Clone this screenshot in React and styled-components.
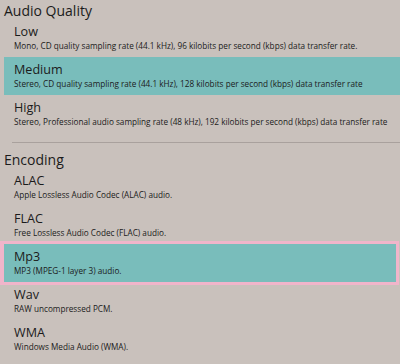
import React from "react";
import styled, { createGlobalStyle } from "styled-components";

const Global = createGlobalStyle`
  html, body { margin: 0; padding: 0; background: #c9c1bc; }
  body { font-family: "Open Sans", "Noto Sans", sans-serif; color: #1b1b1b; }
`;

const Page = styled.div`
  width: 400px;
  height: 364px;
  overflow: hidden;
  background: #c9c1bc;
`;

const Header = styled.div`
  font-size: 14px;
  line-height: 17px;
  padding: ${(p) => p.$top}px 0 0 4px;
`;

const List = styled.div`
  display: flex;
  flex-direction: column;
  padding-left: 4px;
`;

const Row = styled.div`
  height: 38px;
  box-sizing: border-box;
  padding: 5px 0 0 10px;
  background: ${(p) => (p.$selected ? "#79bdbb" : "transparent")};
  ${(p) =>
    p.$focused &&
    `
    margin-right: 4px;
    box-shadow: 0 0 0 3px #f0b5ca, -1px 0 0 3px #f0b5ca;
  `}
`;

const Title = styled.div`
  font-size: 12.6px;
  line-height: 16px;
  white-space: nowrap;
`;

const Desc = styled.div`
  font-size: 8.2px;
  line-height: 12px;
  white-space: nowrap;
`;

const Separator = styled.div`
  height: 1px;
  margin: 9px 0 0 12px;
  background: #a9a19d;
`;

const quality = [
  {
    t: "Low",
    d: "Mono, CD quality sampling rate (44.1 kHz), 96 kilobits per second (kbps) data transfer rate.",
  },
  {
    t: "Medium",
    d: "Stereo, CD quality sampling rate (44.1 kHz), 128 kilobits per second (kbps) data transfer rate",
    selected: true,
  },
  {
    t: "High",
    d: "Stereo, Professional audio sampling rate (48 kHz), 192 kilobits per second (kbps) data transfer rate",
  },
];

const encoding = [
  { t: "ALAC", d: "Apple Lossless Audio Codec (ALAC) audio." },
  { t: "FLAC", d: "Free Lossless Audio Codec (FLAC) audio." },
  { t: "Mp3", d: "MP3 (MPEG-1 layer 3) audio.", selected: true, focused: true },
  { t: "Wav", d: "RAW uncompressed PCM." },
  { t: "WMA", d: "Windows Media Audio (WMA)." },
];

function Item({ item }) {
  return (
    <Row $selected={item.selected} $focused={item.focused}>
      <Title>{item.t}</Title>
      <Desc>{item.d}</Desc>
    </Row>
  );
}

export default function App() {
  return (
    <Page>
      <Global />
      <Header $top={2}>Audio Quality</Header>
      <List>
        {quality.map((q) => (
          <Item key={q.t} item={q} />
        ))}
      </List>
      <Separator />
      <Header $top={8}>Encoding</Header>
      <List>
        {encoding.map((q) => (
          <Item key={q.t} item={q} />
        ))}
      </List>
    </Page>
  );
}
